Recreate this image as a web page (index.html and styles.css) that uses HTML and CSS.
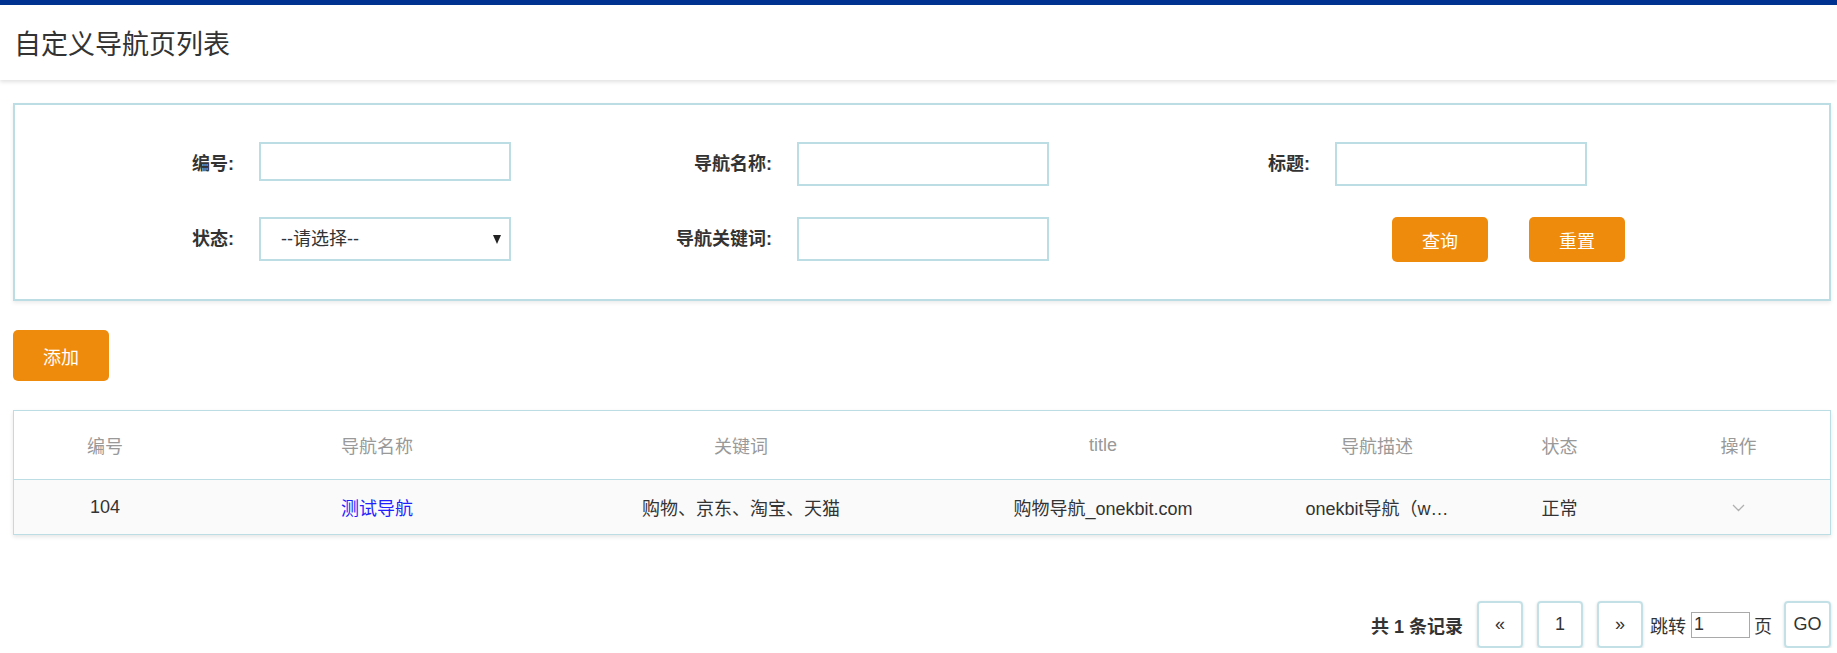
FILE: index.html
```html
<!DOCTYPE html>
<html lang="zh-CN">
<head>
    <meta charset="UTF-8">
    <title>自定义导航页列表</title>
    <link rel="stylesheet" href="styles.css">
</head>
<body>
    <div class="topbar"></div>
    <div class="page-header">
        <h1>自定义导航页列表</h1>
    </div>

    <div class="main">
        <!-- search form -->
        <div class="search-box">
            <div class="search-row">
                <div class="field">
                    <label class="field-label">编号:</label>
                    <input class="field-input field-input-short" type="text">
                </div>
                <div class="field">
                    <label class="field-label">导航名称:</label>
                    <input class="field-input" type="text">
                </div>
                <div class="field">
                    <label class="field-label">标题:</label>
                    <input class="field-input" type="text">
                </div>
            </div>
            <div class="search-row">
                <div class="field">
                    <label class="field-label">状态:</label>
                    <div class="select-wrap">
                        <select class="field-input field-select">
                            <option>--请选择--</option>
                            <option>正常</option>
                            <option>禁用</option>
                        </select>
                    </div>
                </div>
                <div class="field">
                    <label class="field-label">导航关键词:</label>
                    <input class="field-input" type="text">
                </div>
                <div class="field">
                    <span class="field-label"></span>
                    <div class="search-actions">
                        <button class="btn btn-search">查询</button>
                        <button class="btn btn-reset">重置</button>
                    </div>
                </div>
            </div>
        </div>

        <button class="btn btn-add">添加</button>

        <table class="nav-table">
            <thead>
                <tr>
                    <th class="col-id">编号</th>
                    <th class="col-name">导航名称</th>
                    <th class="col-keys">关键词</th>
                    <th class="col-title">title</th>
                    <th class="col-desc">导航描述</th>
                    <th class="col-status">状态</th>
                    <th class="col-ops">操作</th>
                </tr>
            </thead>
            <tbody>
                <tr>
                    <td>104</td>
                    <td><a class="nav-link" href="#">测试导航</a></td>
                    <td>购物、京东、淘宝、天猫</td>
                    <td>购物导航_onekbit.com</td>
                    <td title="onekbit导航（www.onekbit.com）">onekbit导航（w…</td>
                    <td>正常</td>
                    <td>
                        <svg class="chevron" width="13" height="8" viewBox="0 0 13 8">
                            <polyline points="1,1 6.5,6.5 12,1" fill="none" stroke="#b0b0b0" stroke-width="1.3"/>
                        </svg>
                    </td>
                </tr>
            </tbody>
        </table>

        <!-- pager -->
        <div class="pager">
            <span class="pager-total">共 1 条记录</span>
            <a class="pager-btn" href="#">&laquo;</a>
            <a class="pager-btn" href="#">1</a>
            <a class="pager-btn" href="#">&raquo;</a>
            <span class="pager-jump">跳转</span>
            <input class="pager-input" type="text" value="1">
            <span class="pager-unit">页</span>
            <a class="pager-btn pager-go" href="#">GO</a>
        </div>
    </div>
</body>
</html>
```

FILE: styles.css
```css
body {
    margin: 0;
    font-family: "Liberation Sans", "Noto Sans CJK SC", sans-serif;
    color: #333;
    background-color: #fff;
}

.topbar {
    height: 5px;
    background-color: #003391;
}

.page-header {
    height: 75px;
    display: flex;
    align-items: center;
    padding-left: 14px;
    box-shadow: 0 2px 4px rgba(0, 0, 0, 0.12);
}

.page-header h1 {
    margin: 0;
    font-size: 27px;
    font-weight: normal;
    color: #333;
}

.main {
    padding: 23px 6px 0 13px;
}

.search-box {
    border: 2px solid #bddde4;
    padding: 37px 0 37px 99px;
    box-shadow: 0 2px 4px rgba(0, 0, 0, 0.08);
}

.search-row {
    display: flex;
    align-items: flex-start;
}

.search-row + .search-row {
    margin-top: 31px;
}

.field {
    display: flex;
    align-items: flex-start;
    width: 538px;
}

.field-label {
    width: 120px;
    margin-right: 25px;
    text-align: right;
    font-size: 18px;
    font-weight: bold;
    line-height: 44px;
    color: #333;
}

.field-input {
    box-sizing: border-box;
    width: 252px;
    height: 44px;
    border: 2px solid #bddde4;
    outline: none;
    font-family: inherit;
    font-size: 18px;
    color: #333;
    background: #fff;
}

.field-input-short {
    height: 39px;
}

.select-wrap {
    position: relative;
}

.select-wrap::after {
    content: "";
    position: absolute;
    right: 10px;
    top: 18px;
    border-left: 4px solid transparent;
    border-right: 4px solid transparent;
    border-top: 9px solid #222;
    pointer-events: none;
}

.field-select {
    appearance: none;
    -webkit-appearance: none;
    padding-left: 20px;
    border-radius: 0;
}

.search-actions {
    display: flex;
    gap: 41px;
    padding-left: 57px;
}

.btn {
    border: none;
    border-radius: 5px;
    background-color: #ef8b0c;
    color: #fff;
    font-family: inherit;
    font-size: 18px;
    cursor: pointer;
}

.btn-search,
.btn-reset {
    width: 96px;
    height: 45px;
}

.btn-add {
    display: block;
    width: 96px;
    height: 51px;
    margin-top: 29px;
}

.nav-table {
    width: 100%;
    margin-top: 29px;
    border-collapse: collapse;
    border: 1px solid #bddde4;
    box-shadow: 0 2px 4px rgba(0, 0, 0, 0.1);
    font-size: 18px;
}

.nav-table th {
    height: 68px;
    font-weight: normal;
    color: #999;
    text-align: center;
    padding: 0;
}

.nav-table td {
    height: 54px;
    text-align: center;
    padding: 0;
    background-color: #fafafa;
    border-top: 1px solid #bddde4;
    color: #333;
    white-space: nowrap;
}

.col-id { width: 182px; }
.col-name { width: 362px; }
.col-keys { width: 366px; }
.col-title { width: 358px; }
.col-desc { width: 190px; }
.col-status { width: 175px; }
.col-ops { width: 183px; }

.nav-link {
    color: #1f1fff;
    text-decoration: none;
}

.chevron {
    vertical-align: middle;
}

.pager {
    display: flex;
    justify-content: flex-end;
    align-items: center;
    margin-top: 66px;
    font-size: 18px;
}

.pager-total {
    font-weight: bold;
    margin-right: 14px;
}

.pager-btn {
    box-sizing: border-box;
    width: 46px;
    height: 47px;
    display: flex;
    align-items: center;
    justify-content: center;
    border: 2px solid #c3e0e6;
    border-radius: 4px;
    box-shadow: 0 1px 3px rgba(0, 0, 0, 0.15);
    color: #333;
    text-decoration: none;
    margin-right: 14px;
}

.pager-jump {
    margin-left: -7px;
}

.pager-input {
    box-sizing: border-box;
    width: 59px;
    height: 26px;
    margin-left: 5px;
    padding: 0 2px;
    border: 1px solid #a9a9a9;
    font-family: inherit;
    font-size: 18px;
    color: #333;
}

.pager-unit {
    margin-left: 4px;
    margin-right: 12px;
}

.pager-go {
    width: 47px;
    margin-right: 0;
}
```
